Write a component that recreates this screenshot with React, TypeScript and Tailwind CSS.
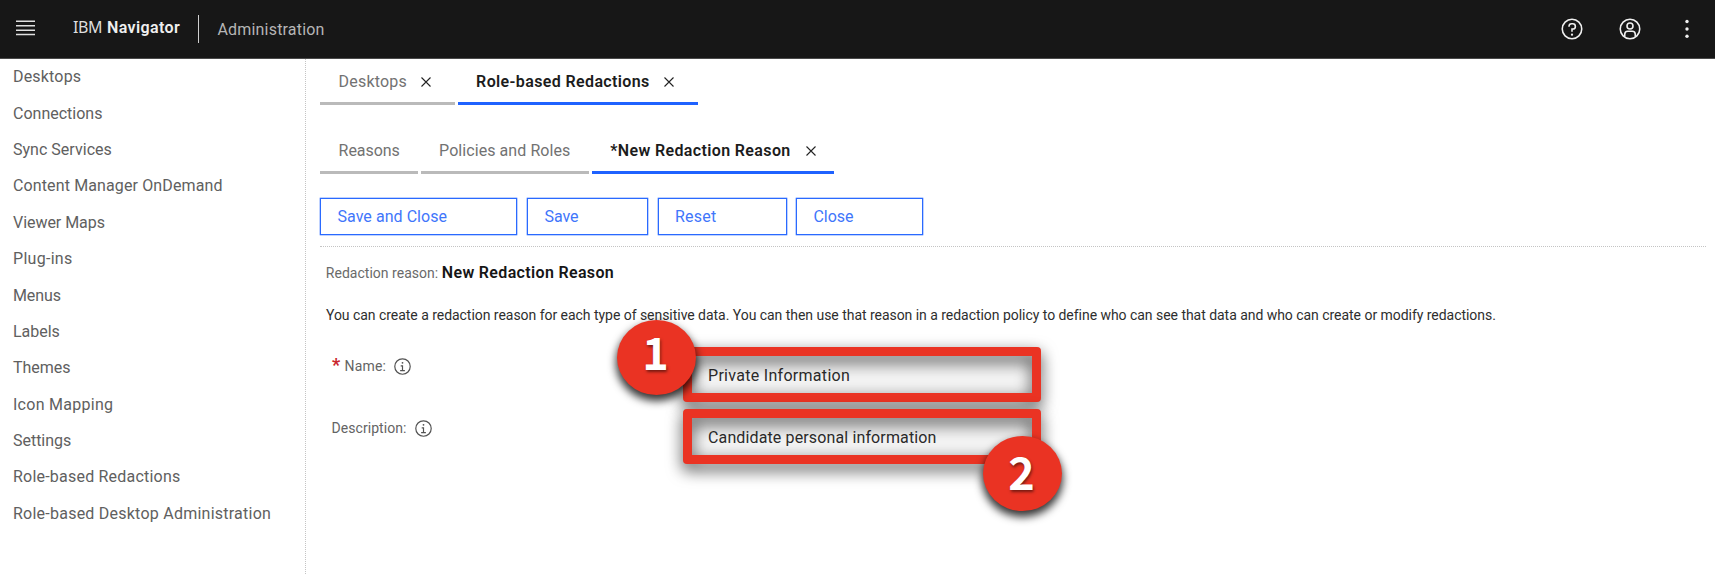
import type { ReactNode } from "react";

const navItems: { label: string; tracking: string }[] = [
  { label: "Desktops", tracking: "tracking-[0.18px]" },
  { label: "Connections", tracking: "tracking-[0px]" },
  { label: "Sync Services", tracking: "tracking-[0.02px]" },
  { label: "Content Manager OnDemand", tracking: "tracking-[0.126px]" },
  { label: "Viewer Maps", tracking: "tracking-[-0.04px]" },
  { label: "Plug-ins", tracking: "tracking-[0.295px]" },
  { label: "Menus", tracking: "tracking-[-0.1px]" },
  { label: "Labels", tracking: "tracking-[-0.03px]" },
  { label: "Themes", tracking: "tracking-[-0.03px]" },
  { label: "Icon Mapping", tracking: "tracking-[0.27px]" },
  { label: "Settings", tracking: "tracking-[-0.02px]" },
  { label: "Role-based Redactions", tracking: "tracking-[0.213px]" },
  { label: "Role-based Desktop Administration", tracking: "tracking-[0.238px]" },
];

function CloseIcon() {
  return (
    <svg className="ml-auto size-[10px] shrink-0" viewBox="0 0 10 10" fill="none" stroke="#222" strokeWidth="1.1">
      <path d="M0.5 0.5l9 9M9.5 0.5l-9 9" />
    </svg>
  );
}

function InfoIcon() {
  return (
    <svg className="size-[19px] shrink-0" viewBox="0 0 32 32">
      <circle cx="16" cy="16" r="13" fill="none" stroke="#525252" strokeWidth="2" />
      <path d="M17 22v-8h-4v2h2v6h-3v2h8v-2z" fill="#525252" />
      <circle cx="16" cy="9.8" r="1.5" fill="#525252" />
    </svg>
  );
}

type TabProps = { children: ReactNode; active?: boolean; closable?: boolean; className: string };

function Tab({ children, active, closable, className }: TabProps) {
  const tone = active
    ? "border-[#1f62ff] font-semibold text-[#1c1c1c]"
    : "border-[#bababa] text-[#727272]";
  return (
    <div className={`flex h-[46px] shrink-0 items-center border-b-[3px] pt-[2px] ${tone} ${className}`}>
      <span>{children}</span>
      {closable && <CloseIcon />}
    </div>
  );
}

function Button({ children, className }: { children: ReactNode; className: string }) {
  return (
    <button
      className={`flex h-[37px] shrink-0 items-center border-[1.5px] border-[#2a6aff] pl-[16.5px] pt-px text-left text-[#3f76fb] ring-[0.3px] ring-[#2a6aff] ${className}`}
    >
      {children}
    </button>
  );
}

function Marker({ children, className }: { children: ReactNode; className: string }) {
  return (
    <div
      className={`absolute z-20 flex h-[75px] w-[79px] justify-center rounded-[50%] bg-[#ea3323] pr-[2px] font-['Noto_Sans_CJK_SC',sans-serif] text-[45px] font-bold text-white shadow-[0_5px_9px_1px_rgba(0,0,0,0.8)] [text-shadow:1px_2px_3px_rgba(0,0,0,0.5)] ${className}`}
    >
      {children}
    </div>
  );
}

function Field({ value, tracking, children }: { value: string; tracking: string; children: ReactNode }) {
  return (
    <div className="relative mt-[11px] h-[55px] w-[358px]">
      <div className="h-full rounded-[4px] bg-[#f3f3f3] pt-[2px] pl-[25px]">
        <span className={`leading-[53px] text-[#2b2b2b] ${tracking}`}>{value}</span>
      </div>
      <div className="absolute inset-0 z-10 rounded-[4px] border-[9px] border-[#ea3323] drop-shadow-[0_6px_8px_rgba(0,0,0,0.75)]" />
      {children}
    </div>
  );
}

export default function App() {
  return (
    <div className="flex h-[574px] w-[1718px] flex-col overflow-hidden bg-white font-['Roboto',sans-serif] text-[16px]">
      <header className="flex h-[59px] w-[1715px] shrink-0 items-center border-b border-[#4a4a4a] bg-[#171717]">
        <svg className="ml-[16px] h-[16px] w-[19px] -translate-y-px" viewBox="0 0 19 16" fill="#e0e0e0">
          <path d="M0 0.5h19v1.5H0zM0 4.9h19v1.5H0zM0 9.4h19v1.5H0zM0 13.8h19v1.5H0z" />
        </svg>
        <div className="ml-[38px] flex w-[125px] items-baseline pb-[3px] whitespace-pre text-[#efefef]">
          <span className="w-[34px] font-['Noto_Sans',sans-serif] text-[16px] tracking-[-0.4px] text-[#dedede]">IBM</span>
          <span className="font-semibold tracking-[0.388px]">Navigator</span>
        </div>
        <div className="h-[28px] w-px bg-[#cfcfcf]" />
        <span className="ml-[18.5px] pt-[1px] tracking-[0.18px] text-[#b5b5b5]">Administration</span>
        <div className="ml-auto flex items-center text-[#f0f0f0]">
          <svg className="size-[24px]" viewBox="0 0 32 32" fill="none" stroke="currentColor" strokeWidth="2.1">
            <circle cx="16" cy="16" r="13" />
            <path d="M12 13v-.5A3.5 3.5 0 0 1 15.5 9H17a3.5 3.5 0 0 1 0 7h-1v3.5" />
            <circle cx="16" cy="23.5" r="1.5" fill="currentColor" stroke="none" />
          </svg>
          <svg className="ml-[34px] size-[24px]" viewBox="0 0 32 32" fill="none" stroke="currentColor" strokeWidth="2.1">
            <circle cx="16" cy="16" r="13" />
            <circle cx="16" cy="12" r="4" />
            <path d="M9 26v-3a4 4 0 0 1 4-4h6a4 4 0 0 1 4 4v3" />
          </svg>
          <svg className="mr-[26px] ml-[43.5px] h-[20px] w-[4px]" viewBox="0 0 4 20" fill="currentColor">
            <circle cx="2" cy="2.5" r="1.7" />
            <circle cx="2" cy="10" r="1.7" />
            <circle cx="2" cy="17.3" r="1.7" />
          </svg>
        </div>
      </header>

      <div className="flex min-h-0 flex-1">
        <nav className="w-[306px] shrink-0 border-r border-dotted border-[#c4c4c4]">
          <ul className="pt-[0.2px]">
            {navItems.map((item) => (
              <li key={item.label} className={`h-[36.4px] pl-[13px] leading-[36.4px] text-[#606060] ${item.tracking}`}>
                {item.label}
              </li>
            ))}
          </ul>
        </nav>

        <main className="flex min-w-0 flex-1 flex-col pl-[14px]">
          <div className="flex gap-[2.5px]">
            <Tab closable className="w-[135px] pr-[24px] pl-[18.6px] tracking-[0.18px]">Desktops</Tab>
            <Tab active closable className="w-[240.5px] pr-[24px] pl-[18.6px] tracking-[0.375px]">Role-based Redactions</Tab>
          </div>
          <div className="mt-[23px] flex gap-[2.5px]">
            <Tab className="w-[98px] pl-[18.6px] tracking-[-0.04px]">Reasons</Tab>
            <Tab className="w-[168.5px] pl-[18.6px] tracking-[0.07px]">Policies and Roles</Tab>
            <Tab active closable className="w-[242.5px] pr-[18px] pl-[18.8px] tracking-[0.362px]">*New Redaction Reason</Tab>
          </div>

          <div className="mt-[23.5px] flex h-[37px]">
            <Button className="w-[196.5px] tracking-[0.046px]">Save and Close</Button>
            <Button className="ml-[10.5px] w-[121px] tracking-[-0.07px]">Save</Button>
            <Button className="ml-[9.5px] w-[129.5px] tracking-[0.229px]">Reset</Button>
            <Button className="ml-[9px] w-[127px] tracking-[-0.04px]">Close</Button>
          </div>
          <div className="mt-[11.5px] mr-[12px] border-t border-dotted border-[#c4c4c4]" />

          <div className="mt-[13.5px] flex items-baseline pl-[5.8px] leading-[24px]">
            <span className="w-[116px] text-[14px] tracking-[0.02px] text-[#6a6a6a]">Redaction reason:</span>
            <span className="font-semibold tracking-[0.338px] text-[#161616]">New Redaction Reason</span>
          </div>
          <p className="mt-[20px] pl-[6px] text-[14px] leading-[20px] tracking-[-0.038px] whitespace-nowrap text-[#2e2e2e]">
            You can create a redaction reason for each type of sensitive data. You can then use that reason in a redaction policy to define who can see that data and who can create or modify redactions.
          </p>

          <div className="mt-[11px] flex h-[62px]">
            <label className="flex h-full w-[363px] items-center pl-[12px] text-[14px] text-[#646464]">
              <span className="w-[12.5px] pb-[3px] text-[18px] leading-[18px] font-bold text-[#c9252d]">*</span>
              <span className="mr-[6.5px] tracking-[0.17px]">Name:</span>
              <InfoIcon />
            </label>
            <Field value="Private Information" tracking="tracking-[0.294px]">
              <Marker className="-top-[27px] -left-[66px] leading-[61px]">1</Marker>
            </Field>
          </div>
          <div className="flex h-[62px]">
            <label className="flex h-full w-[363px] items-center pl-[11.5px] text-[14px] text-[#646464]">
              <span className="mr-[7.5px] tracking-[0.06px]">Description:</span>
              <InfoIcon />
            </label>
            <Field value="Candidate personal information" tracking="tracking-[0.129px]">
              <Marker className="top-[27px] left-[300px] leading-[69px]">2</Marker>
            </Field>
          </div>
        </main>
      </div>
    </div>
  );
}
